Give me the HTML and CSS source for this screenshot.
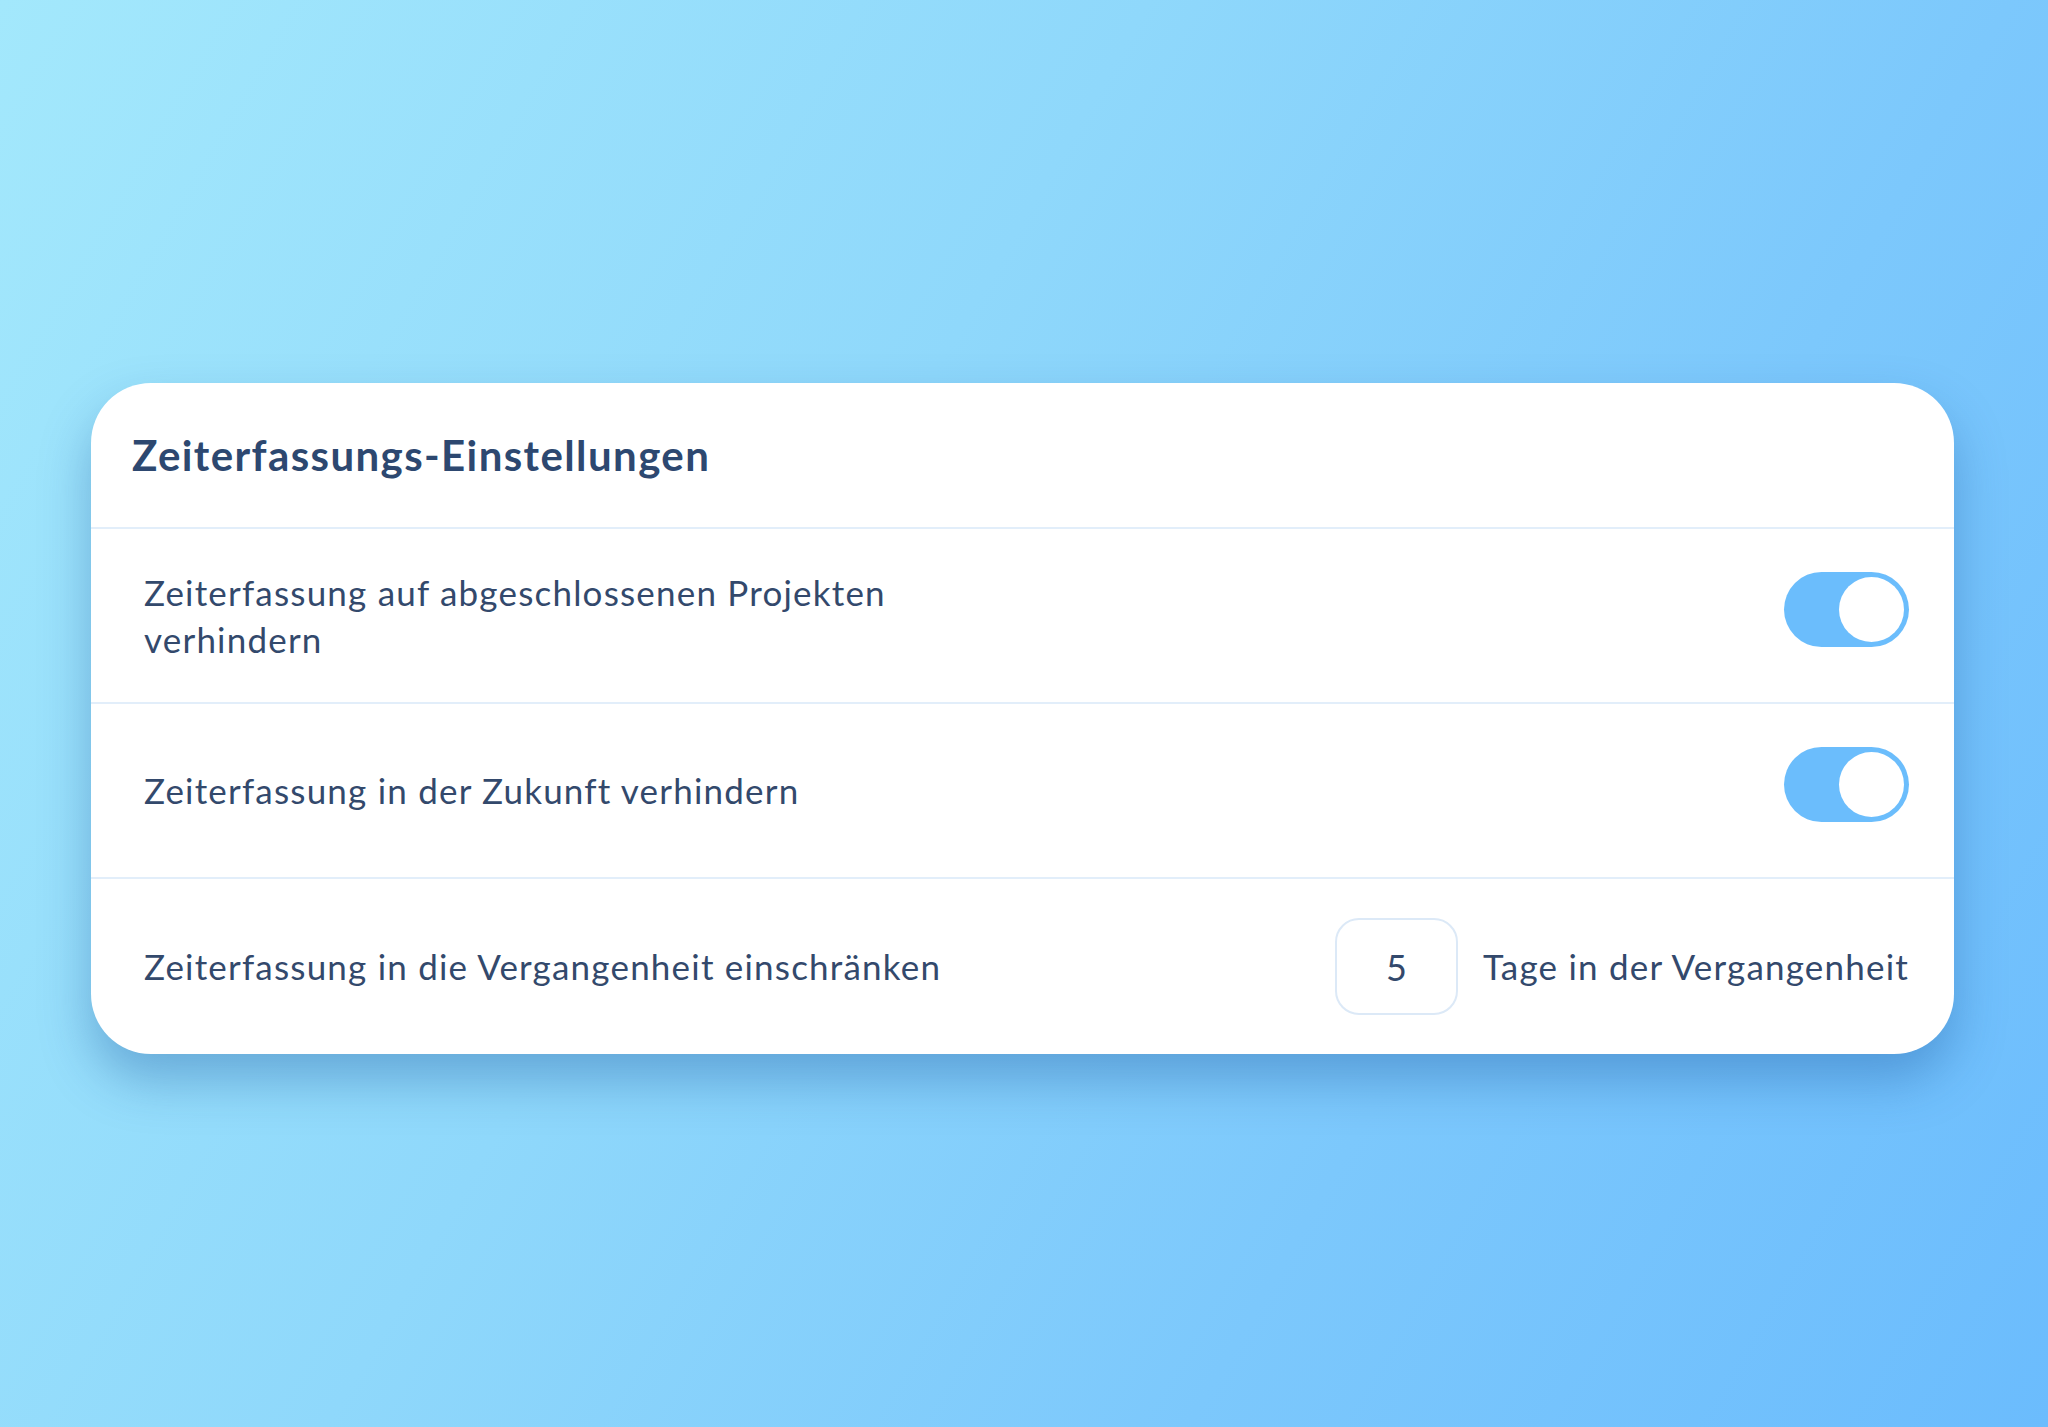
FILE: index.html
```html
<!DOCTYPE html>
<html lang="de">
<head>
<meta charset="utf-8">
<title>Zeiterfassungs-Einstellungen</title>
<link rel="stylesheet" href="styles.css">
</head>
<body>
<main class="stage">
  <section class="card">
    <header class="card-header">
      <h1 class="card-title">Zeiterfassungs-Einstellungen</h1>
    </header>
    <div class="row">
      <span class="label label-wrap">Zeiterfassung auf abgeschlossenen Projekten verhindern</span>
      <span class="toggle on"><span class="knob"></span></span>
    </div>
    <div class="row">
      <span class="label">Zeiterfassung in der Zukunft verhindern</span>
      <span class="toggle on"><span class="knob"></span></span>
    </div>
    <div class="row row-last">
      <span class="label">Zeiterfassung in die Vergangenheit einschränken</span>
      <span class="days">
        <span class="days-input">5</span>
        <span class="label">Tage in der Vergangenheit</span>
      </span>
    </div>
  </section>
</main>
</body>
</html>
```

FILE: styles.css
```css
* { box-sizing: border-box; }
html, body { margin: 0; height: 100%; }
body {
  background: linear-gradient(120deg, #a3e8fc 0%, #8fd8fb 40%, #7cc8fc 70%, #6bbcfd 100%);
  font-family: "Lato", "Open Sans", sans-serif;
  color: #2f4669;
}
.stage {
  padding: 383px 94px 0 91px;
}
.card {
  background: #ffffff;
  border-radius: 60px;
  box-shadow: 0 26px 50px rgba(30, 90, 160, 0.38);
  overflow: hidden;
}
.card-header {
  height: 146px;
  display: flex;
  align-items: center;
  padding-left: 41px;
  border-bottom: 2px solid #e2eefa;
}
.card-title {
  margin: 0;
  font-size: 42px;
  font-weight: 700;
  color: #2d4870;
  letter-spacing: 1.4px;
}
.row {
  height: 175px;
  display: flex;
  align-items: center;
  justify-content: space-between;
  padding: 0 45px 0 53px;
  border-bottom: 2px solid #e2eefa;
}
.row-last { border-bottom: none; }
.label {
  font-size: 35px;
  line-height: 47px;
  color: #33496c;
  letter-spacing: 1.2px;
}
.label-wrap { max-width: 840px; }
.toggle {
  width: 125px;
  height: 75px;
  border-radius: 38px;
  background: #6bbdfc;
  display: flex;
  align-items: center;
  justify-content: flex-end;
  padding-right: 5px;
  margin-bottom: 12px;
}
.knob {
  width: 65px;
  height: 65px;
  border-radius: 50%;
  background: #ffffff;
}
.days {
  display: flex;
  align-items: center;
  gap: 25px;
}
.days-input {
  width: 123px;
  height: 97px;
  border: 2px solid #dce9f7;
  border-radius: 24px;
  display: flex;
  align-items: center;
  justify-content: center;
  font-size: 36px;
  color: #33496c;
}
```
